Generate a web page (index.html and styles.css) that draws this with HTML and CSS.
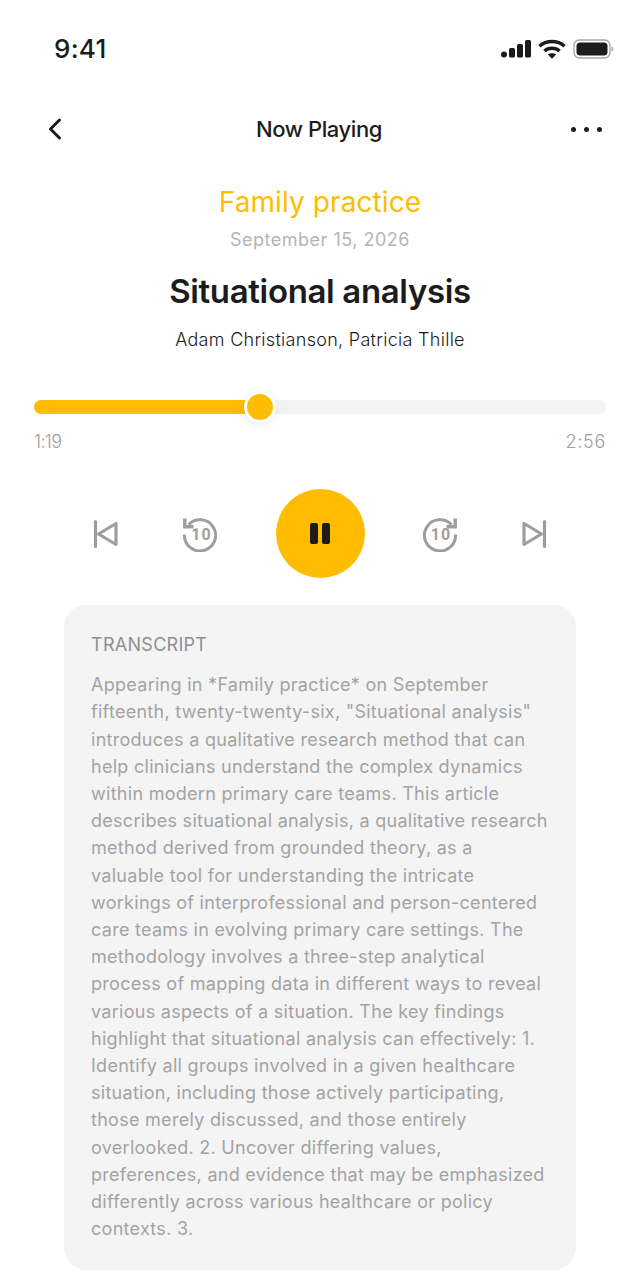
FILE: index.html
```html
<!DOCTYPE html>
<html>
<head>
    <title>Now Playing</title>
    <meta charset="utf-8">
    <link rel="stylesheet" href="styles.css">
</head>

<body>
    <div class="status-bar">
        <span class="time">9:41</span>
        <div class="status-icons">
            <svg width="30" height="18" viewBox="0 0 30 18" fill="#1c1c1c">
                <rect x="0" y="11.5" width="6" height="6" rx="3"/>
                <rect x="8" y="8" width="6" height="9.5" rx="1.5"/>
                <rect x="16" y="4" width="6" height="13.5" rx="1.5"/>
                <rect x="24" y="0" width="6" height="17.5" rx="1.5"/>
            </svg>
            <svg width="28" height="20" viewBox="0 0 28 20" fill="none" stroke="#1c1c1c" stroke-width="3.4">
                <path d="M1.5 7.2C8.5 1 19.5 1 26.5 7.2"/>
                <path d="M6.4 12C10.6 8.4 17.4 8.4 21.6 12"/>
                <path d="M14 19.8L9.8 15.6C12 13.8 16 13.8 18.2 15.6Z" fill="#1c1c1c" stroke="none"/>
            </svg>
            <svg width="41" height="20" viewBox="0 0 41 20">
                <rect x="1" y="1" width="36" height="18" rx="5.5" fill="none" stroke="#a8a8a8" stroke-width="1.4"/>
                <rect x="3.5" y="3.5" width="31" height="13" rx="3.5" fill="#1c1c1c"/>
                <path d="M38.5 7.5C40 8 40.5 9 40.5 10C40.5 11 40 12 38.5 12.5Z" fill="#b0b0b0"/>
            </svg>
        </div>
    </div>

    <div class="nav-bar">
        <svg class="back" width="16" height="24" viewBox="0 0 16 24" fill="none" stroke="#1c1c1c" stroke-width="3" stroke-linecap="round" stroke-linejoin="round">
            <path d="M12.5 3L3.5 12L12.5 21"/>
        </svg>
        <h1 class="nav-title">Now Playing</h1>
        <div class="more">
            <span></span><span></span><span></span>
        </div>
    </div>

    <div class="episode">
        <div class="journal">Family practice</div>
        <div class="date">September 15, 2026</div>
        <h2 class="title">Situational analysis</h2>
        <div class="authors">Adam Christianson, Patricia Thille</div>
    </div>

    <div class="progress">
        <div class="track">
            <div class="fill" style="width: 39.5%"></div>
            <div class="thumb"></div>
        </div>
        <div class="times">
            <span class="elapsed">1:19</span>
            <span class="total">2:56</span>
        </div>
    </div>

    <div class="controls">
        <svg width="26" height="30" viewBox="0 0 26 30" fill="none" stroke="#9e9e9e" stroke-width="3.2" stroke-linejoin="round" stroke-linecap="round">
            <path d="M2.5 2.5V27.5"/>
            <path d="M23 4.5V25.5L5.5 15Z"/>
        </svg>
        <svg class="skip-back" width="36" height="36" viewBox="0 0 36 36" fill="none" stroke="#9e9e9e" stroke-width="3">
            <path d="M6.6 8.6A15.6 15.6 0 1 1 2.4 18.5"/>
            <path d="M2.8 2.5V10.8H11.5" stroke-width="3.4"/>
            <text x="19.5" y="23.5" class="skip-label">10</text>
        </svg>
        <button class="play">
            <span></span><span></span>
        </button>
        <svg class="skip-forward" width="36" height="36" viewBox="0 0 36 36" fill="none" stroke="#9e9e9e" stroke-width="3">
            <path d="M29.4 8.6A15.6 15.6 0 1 0 33.6 18.5"/>
            <path d="M33.2 2.5V10.8H24.5" stroke-width="3.4"/>
            <text x="19" y="23.5" class="skip-label">10</text>
        </svg>
        <svg width="26" height="30" viewBox="0 0 26 30" fill="none" stroke="#9e9e9e" stroke-width="3.2" stroke-linejoin="round" stroke-linecap="round">
            <path d="M23.5 2.5V27.5"/>
            <path d="M3 4.5V25.5L20.5 15Z"/>
        </svg>
    </div>

    <div class="transcript">
        <div class="transcript-label">TRANSCRIPT</div>
        <p>Appearing in *Family practice* on September<br>
        fifteenth, twenty-twenty-six, "Situational analysis"<br>
        introduces a qualitative research method that can<br>
        help clinicians understand the complex dynamics<br>
        within modern primary care teams. This article<br>
        describes situational analysis, a qualitative research<br>
        method derived from grounded theory, as a<br>
        valuable tool for understanding the intricate<br>
        workings of interprofessional and person-centered<br>
        care teams in evolving primary care settings. The<br>
        methodology involves a three-step analytical<br>
        process of mapping data in different ways to reveal<br>
        various aspects of a situation. The key findings<br>
        highlight that situational analysis can effectively: 1.<br>
        Identify all groups involved in a given healthcare<br>
        situation, including those actively participating,<br>
        those merely discussed, and those entirely<br>
        overlooked. 2. Uncover differing values,<br>
        preferences, and evidence that may be emphasized<br>
        differently across various healthcare or policy<br>
        contexts. 3.</p>
    </div>
</body>

</html>
```

FILE: styles.css
```css
* {
    box-sizing: border-box;
}

html, body {
    height: 1280px;
    overflow: hidden;
}

body {
    margin: 0;
    font-family: 'Inter', sans-serif;
    color: #1c1c1c;
    background-color: #fff;
}

.status-bar {
    display: flex;
    justify-content: space-between;
    align-items: center;
    height: 40px;
    margin-top: 28px;
    padding: 0 26px 0 54px;
}

.time {
    font-size: 26px;
    font-weight: 500;
    letter-spacing: 0.3px;
}

.status-icons {
    display: flex;
    align-items: center;
    gap: 7px;
    margin-top: 2px;
}

.nav-bar {
    display: grid;
    grid-template-columns: 1fr auto 1fr;
    align-items: center;
    height: 40px;
    margin-top: 41px;
    padding: 0 38px;
}

.back {
    margin-left: 9px;
}

.nav-title {
    margin: 0 2px 0 0;
    font-size: 22px;
    font-weight: 500;
    letter-spacing: -0.4px;
}

.more {
    display: flex;
    justify-content: flex-end;
    gap: 8px;
}

.more span {
    width: 5px;
    height: 5px;
    border-radius: 50%;
    background-color: #1c1c1c;
}

.episode {
    display: flex;
    flex-direction: column;
    align-items: center;
    margin-top: 33px;
}

.journal {
    font-size: 28px;
    line-height: 40px;
    letter-spacing: 0.1px;
    color: #ffbc00;
}

.date {
    margin-top: 1px;
    font-size: 18px;
    line-height: 34px;
    letter-spacing: 0.5px;
    color: #b5b5b5;
}

.title {
    margin: 12px 0 0;
    font-size: 33px;
    line-height: 44px;
    font-weight: 600;
    letter-spacing: -0.35px;
}

.authors {
    margin-top: 14px;
    font-size: 18px;
    line-height: 26px;
    font-weight: 300;
    letter-spacing: 0.29px;
}

.progress {
    margin-top: 47px;
    padding: 0 34px;
}

.track {
    position: relative;
    height: 14px;
    border-radius: 7px;
    background-color: #f3f3f4;
}

.fill {
    height: 100%;
    border-radius: 7px;
    background-color: #ffbc00;
}

.thumb {
    position: absolute;
    left: 209.5px;
    top: -9px;
    width: 32px;
    height: 32px;
    border: 3px solid #fff;
    border-radius: 50%;
    background-color: #ffbc00;
    box-shadow: 0 2px 8px rgba(0, 0, 0, 0.08);
}

.times {
    display: flex;
    justify-content: space-between;
    margin-top: 15px;
    font-size: 18px;
    line-height: 26px;
    font-weight: 300;
    color: #9e9e9e;
}

.elapsed {
    letter-spacing: -0.7px;
}

.total {
    letter-spacing: 0.7px;
}

.controls {
    display: flex;
    justify-content: center;
    align-items: center;
    margin-top: 34px;
}

.skip-back {
    margin: 0 57.5px 0 63px;
}

.skip-forward {
    margin: 0 63px 0 57.5px;
}

.skip-label {
    font-family: 'Roboto', sans-serif;
    font-size: 16px;
    font-weight: 700;
    letter-spacing: 1px;
    fill: #9e9e9e;
    stroke: none;
    text-anchor: middle;
}

.play {
    display: flex;
    justify-content: center;
    align-items: center;
    gap: 4px;
    width: 89px;
    height: 89px;
    padding: 0;
    border: none;
    border-radius: 50%;
    background-color: #ffbc00;
}

.play span {
    width: 8px;
    height: 21px;
    border-radius: 2px;
    background-color: #1c1c1c;
}

.transcript {
    width: 512px;
    height: 665px;
    margin: 27px auto 0;
    padding: 26px 27px 0;
    border-radius: 22px;
    background-color: #f4f4f5;
    color: #a3a3a3;
    font-size: 18px;
    line-height: 27.2px;
    letter-spacing: 0.28px;
}

.transcript-label {
    color: #8f8f8f;
}

.transcript p {
    margin: 13px 0 0;
}
```
